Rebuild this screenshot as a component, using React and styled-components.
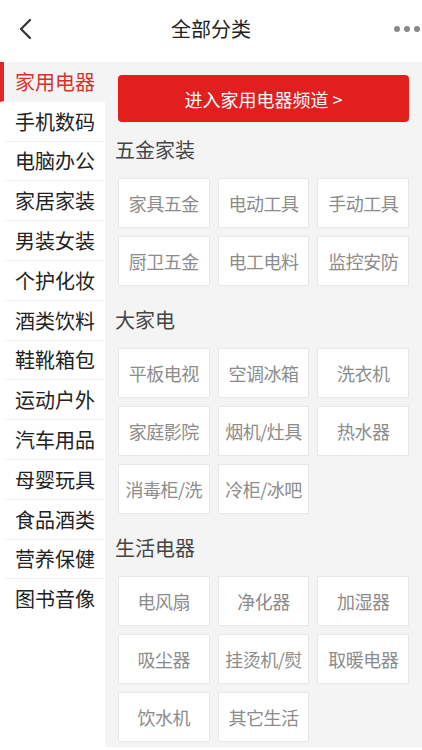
import React from 'react';
import styled, { createGlobalStyle } from 'styled-components';

const GlobalStyle = createGlobalStyle`
  html, body {
    margin: 0;
    padding: 0;
    background: #ffffff;
    font-family: "Noto Sans CJK SC", "Noto Sans", sans-serif;
  }
  * { box-sizing: border-box; }
`;

const Page = styled.div`
  width: 422px;
  height: 750px;
  display: flex;
  flex-direction: column;
  overflow: hidden;
  background: #fff;
`;

const Header = styled.header`
  height: 62px;
  flex-shrink: 0;
  display: flex;
  align-items: center;
  justify-content: space-between;
  padding: 0 2px 4px 18px;
  position: relative;
`;

const Title = styled.h1`
  position: absolute;
  left: 0;
  right: 0;
  top: 15px;
  margin: 0;
  text-align: center;
  font-size: 20px;
  line-height: 28px;
  font-weight: 400;
  color: #222;
  pointer-events: none;
`;

const IconButton = styled.button`
  border: 0;
  background: none;
  padding: 0;
  width: 32px;
  height: 32px;
  display: flex;
  align-items: center;
  justify-content: ${(p) => (p.right ? 'flex-end' : 'flex-start')};
`;

const Dots = styled.div`
  display: flex;
  gap: 4px;
  span {
    width: 6px;
    height: 6px;
    border-radius: 50%;
    background: #8a8a8a;
  }
`;

const Body = styled.div`
  flex: 1;
  display: flex;
  min-height: 0;
`;

const Sidebar = styled.nav`
  width: 105px;
  flex-shrink: 0;
  background: #fff;
  display: flex;
  flex-direction: column;
`;

const NavItem = styled.div`
  height: 39.8px;
  display: flex;
  align-items: center;
  font-size: 20px;
  color: ${(p) => (p.active ? '#d9302b' : '#222')};
  background: ${(p) => (p.active ? '#f4f4f4' : '#fff')};
  border-bottom: 1px solid ${(p) => (p.active || p.last ? 'transparent' : '#eeeeee')};
  border-left: 4px solid ${(p) => (p.active ? '#e0262a' : 'transparent')};
  margin-left: ${(p) => (p.active ? '0' : '3px')};
  padding-left: ${(p) => (p.active ? '11px' : '8px')};
`;

const Content = styled.main`
  flex: 1;
  background: #f4f4f4;
  padding: 13px 13px 0;
  margin-bottom: 3px;
`;

const ChannelButton = styled.button`
  width: 100%;
  height: 47px;
  border: 0;
  border-radius: 4px;
  background: #e31e1f;
  color: #fff;
  font-family: inherit;
  font-size: 18px;
`;

const SectionTitle = styled.h2`
  margin: 0 0 0 -3px;
  height: 56px;
  line-height: 56px;
  font-size: 20px;
  font-weight: 400;
  color: #444;
`;

const Grid = styled.div`
  display: grid;
  grid-template-columns: repeat(3, 1fr);
  gap: 8px;
  margin-bottom: 6px;
`;

const Tile = styled.div`
  height: 50px;
  background: #fff;
  border: 1px solid #e8e8e8;
  display: flex;
  align-items: center;
  justify-content: center;
  font-size: 18px;
  color: #8c8c8c;
  white-space: nowrap;
  overflow: hidden;
  letter-spacing: -0.5px;
`;

const navItems = [
  '家用电器', '手机数码', '电脑办公', '家居家装', '男装女装', '个护化妆', '酒类饮料',
  '鞋靴箱包', '运动户外', '汽车用品', '母婴玩具', '食品酒类', '营养保健', '图书音像',
];

const sections = [
  { title: '五金家装', items: ['家具五金', '电动工具', '手动工具', '厨卫五金', '电工电料', '监控安防'] },
  { title: '大家电', items: ['平板电视', '空调冰箱', '洗衣机', '家庭影院', '烟机/灶具', '热水器', '消毒柜/洗', '冷柜/冰吧'] },
  { title: '生活电器', items: ['电风扇', '净化器', '加湿器', '吸尘器', '挂烫机/熨', '取暖电器', '饮水机', '其它生活'] },
];

export default function App() {
  return (
    <Page>
      <GlobalStyle />
      <Header>
        <IconButton aria-label="返回">
          <svg width="14" height="22" viewBox="0 0 14 22" fill="none">
            <path d="M12 2 L3 11 L12 20" stroke="#333" strokeWidth="2.2" strokeLinecap="round" strokeLinejoin="round" />
          </svg>
        </IconButton>
        <Title>全部分类</Title>
        <IconButton right aria-label="更多">
          <Dots><span /><span /><span /></Dots>
        </IconButton>
      </Header>
      <Body>
        <Sidebar>
          {navItems.map((n, i) => (
            <NavItem key={n} active={i === 0} last={i === navItems.length - 1}>{n}</NavItem>
          ))}
        </Sidebar>
        <Content>
          <ChannelButton>进入家用电器频道 &gt;</ChannelButton>
          {sections.map((s) => (
            <div key={s.title}>
              <SectionTitle>{s.title}</SectionTitle>
              <Grid>
                {s.items.map((it) => (
                  <Tile key={it}>{it}</Tile>
                ))}
              </Grid>
            </div>
          ))}
        </Content>
      </Body>
    </Page>
  );
}
